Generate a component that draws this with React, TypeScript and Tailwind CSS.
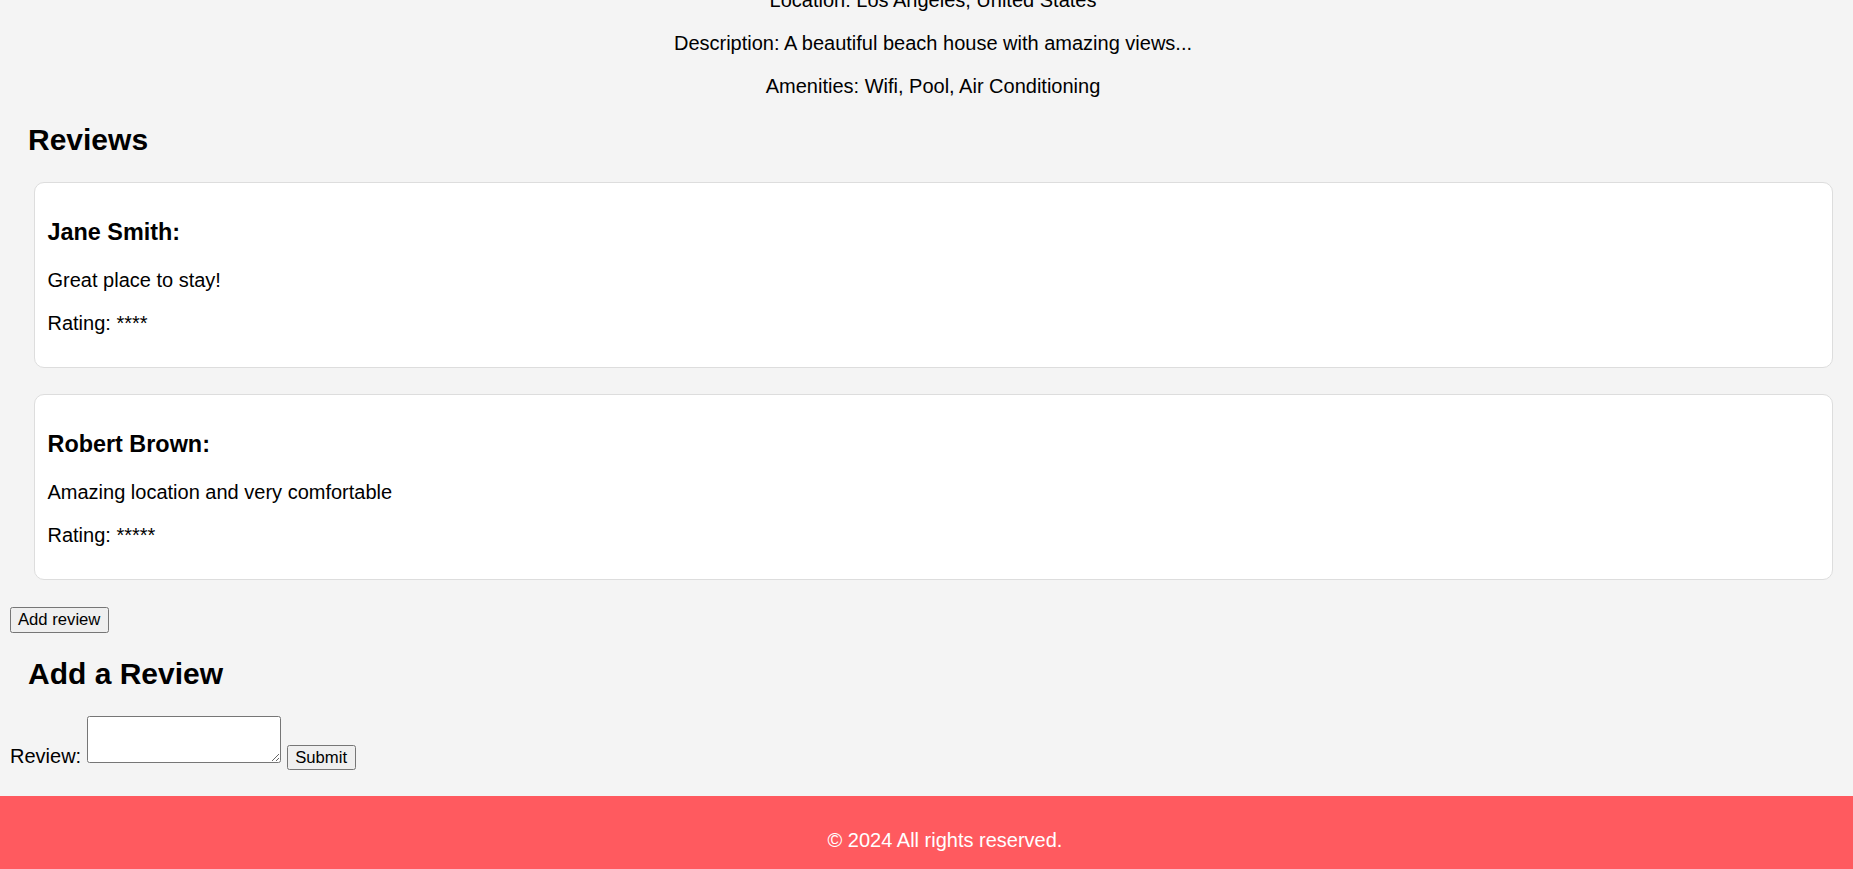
import { useState } from "react";

type Review = {
  author: string;
  text: string;
  rating: number;
};

const reviews: Review[] = [
  { author: "Jane Smith", text: "Great place to stay!", rating: 4 },
  { author: "Robert Brown", text: "Amazing location and very comfortable", rating: 5 },
];

export default function App() {
  const [draft, setDraft] = useState("");

  return (
    <div className="h-[869px] overflow-hidden bg-[#f4f4f4] text-black font-['Liberation_Sans',Arial,sans-serif] text-[20px]">
      {/* Listing details (page is scrolled, top is cut off) */}
      <div className="mt-[-11.5px] pl-[13px] text-center">
        <p className="leading-[23px]">Location: Los Angeles, United States</p>
        <p className="mt-[20px] leading-[23px]">
          Description: A beautiful beach house with amazing views...
        </p>
        <p className="mt-[20px] leading-[23px]">
          Amenities: Wifi, Pool, Air Conditioning
        </p>
      </div>

      {/* Reviews */}
      <section>
        <h2 className="mt-[25px] pl-[28px] text-[30px] font-bold leading-[34px]">
          Reviews
        </h2>
        <div className="mt-[25.5px] ml-[34px] mr-[20.5px] flex flex-col gap-[26px]">
          {reviews.map((r) => (
            <div
              key={r.author}
              className="rounded-[10px] border border-[#dddddd] bg-white p-[12.5px]"
            >
              <h3 className="mt-[23px] text-[23.4px] font-bold leading-[27px]">
                {r.author}:
              </h3>
              <p className="mt-[23px] leading-[23px]">{r.text}</p>
              <p className="mt-[20px] mb-[20px] leading-[23px]">
                Rating: {"*".repeat(r.rating)}
              </p>
            </div>
          ))}
        </div>
      </section>

      <div className="mt-[26.5px] flex pl-[9.5px]">
        <button className="h-[26px] rounded-[2.5px] border border-[#767676] bg-[#efefef] px-[7.5px] text-[16.67px] leading-[20px]">
          Add review
        </button>
      </div>

      {/* Add a review */}
      <h2 className="mt-[24.5px] pl-[28px] text-[30px] font-bold leading-[34px]">
        Add a Review
      </h2>
      <form
        className="mt-[25px] flex h-[54px] items-start pl-[10px]"
        onSubmit={(e) => e.preventDefault()}
      >
        <label className="mt-[29px] leading-[23px]">Review:&nbsp;</label>
        <textarea
          value={draft}
          onChange={(e) => setDraft(e.target.value)}
          className="h-[46.5px] w-[194px] rounded-[2.5px] border border-[#767676] bg-white"
        />
        <button
          type="submit"
          className="ml-[6px] mt-[29.3px] h-[25px] rounded-[2.5px] border border-[#767676] bg-[#efefef] px-[7.5px] text-[16.67px] leading-[20px]"
        >
          Submit
        </button>
      </form>

      {/* Footer */}
      <footer className="mt-[26px] bg-[#ff5a5f] pl-[37px] pt-[32.5px] pb-[32.5px] text-center text-white">
        <p className="leading-[23px]">© 2024 All rights reserved.</p>
      </footer>
    </div>
  );
}
